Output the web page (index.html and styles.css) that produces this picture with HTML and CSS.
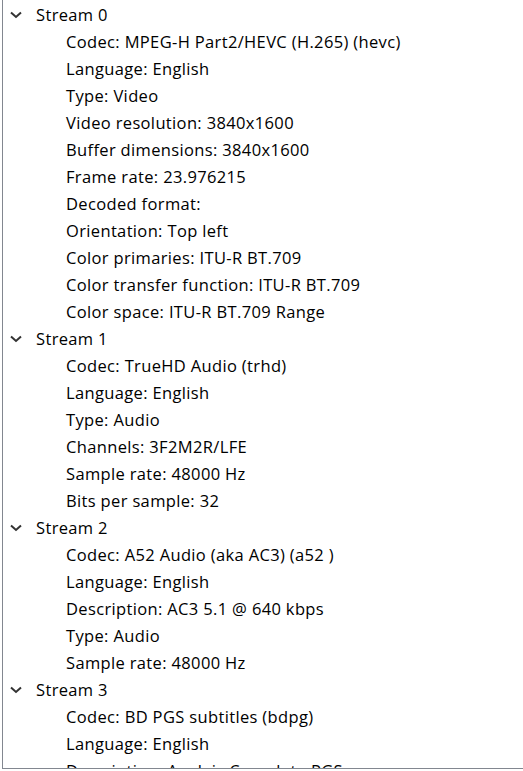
FILE: index.html
```html
<!DOCTYPE html>
<html>
<head>
  <title>Codec details</title>
  <link rel="stylesheet" href="styles.css">
</head>
<body>
  <div class="tree">
    <ul class="streams">
      <li class="stream">
        <div class="row head"><svg class="chev" viewBox="0 0 12 8"><polyline points="1,1.5 6,6 11,1.5"/></svg><span>Stream 0</span></div>
        <ul class="info">
          <li class="row">Codec: MPEG-H Part2/HEVC (H.265) (hevc)</li>
          <li class="row">Language: English</li>
          <li class="row">Type: Video</li>
          <li class="row">Video resolution: 3840x1600</li>
          <li class="row">Buffer dimensions: 3840x1600</li>
          <li class="row">Frame rate: 23.976215</li>
          <li class="row">Decoded format:</li>
          <li class="row">Orientation: Top left</li>
          <li class="row">Color primaries: ITU-R BT.709</li>
          <li class="row">Color transfer function: ITU-R BT.709</li>
          <li class="row">Color space: ITU-R BT.709 Range</li>
        </ul>
      </li>
      <li class="stream">
        <div class="row head"><svg class="chev" viewBox="0 0 12 8"><polyline points="1,1.5 6,6 11,1.5"/></svg><span>Stream 1</span></div>
        <ul class="info">
          <li class="row">Codec: TrueHD Audio (trhd)</li>
          <li class="row">Language: English</li>
          <li class="row">Type: Audio</li>
          <li class="row">Channels: 3F2M2R/LFE</li>
          <li class="row">Sample rate: 48000 Hz</li>
          <li class="row">Bits per sample: 32</li>
        </ul>
      </li>
      <li class="stream">
        <div class="row head"><svg class="chev" viewBox="0 0 12 8"><polyline points="1,1.5 6,6 11,1.5"/></svg><span>Stream 2</span></div>
        <ul class="info">
          <li class="row">Codec: A52 Audio (aka AC3) (a52 )</li>
          <li class="row">Language: English</li>
          <li class="row">Description: AC3 5.1 @ 640 kbps</li>
          <li class="row">Type: Audio</li>
          <li class="row">Sample rate: 48000 Hz</li>
        </ul>
      </li>
      <li class="stream">
        <div class="row head"><svg class="chev" viewBox="0 0 12 8"><polyline points="1,1.5 6,6 11,1.5"/></svg><span>Stream 3</span></div>
        <ul class="info">
          <li class="row">Codec: BD PGS subtitles (bdpg)</li>
          <li class="row">Language: English</li>
          <li class="row">Description: Anglais Complete PGS</li>
        </ul>
      </li>
    </ul>
  </div>
</body>
</html>
```
FILE: styles.css
```css
body {
  margin: 0;
  background-color: #fff;
  font-family: "Open Sans", "Noto Sans", sans-serif;
  font-size: 16.5px;
  letter-spacing: 0.35px;
  color: #000;
}

.tree {
  margin-left: 2px;
  height: 769px;
  border-left: 1px solid #828790;
  border-bottom: 1px solid #828790;
  overflow: hidden;
  padding-top: 1px;
  box-sizing: border-box;
}

ul {
  list-style: none;
  margin: 0;
  padding: 0;
}

.row {
  height: 27px;
  display: flex;
  align-items: center;
  white-space: nowrap;
}

.head {
  padding-left: 7px;
}

.chev {
  width: 12px;
  height: 8px;
  margin-right: 14px;
  fill: none;
  stroke: #333;
  stroke-width: 2;
}

.info .row {
  padding-left: 63px;
}
```
